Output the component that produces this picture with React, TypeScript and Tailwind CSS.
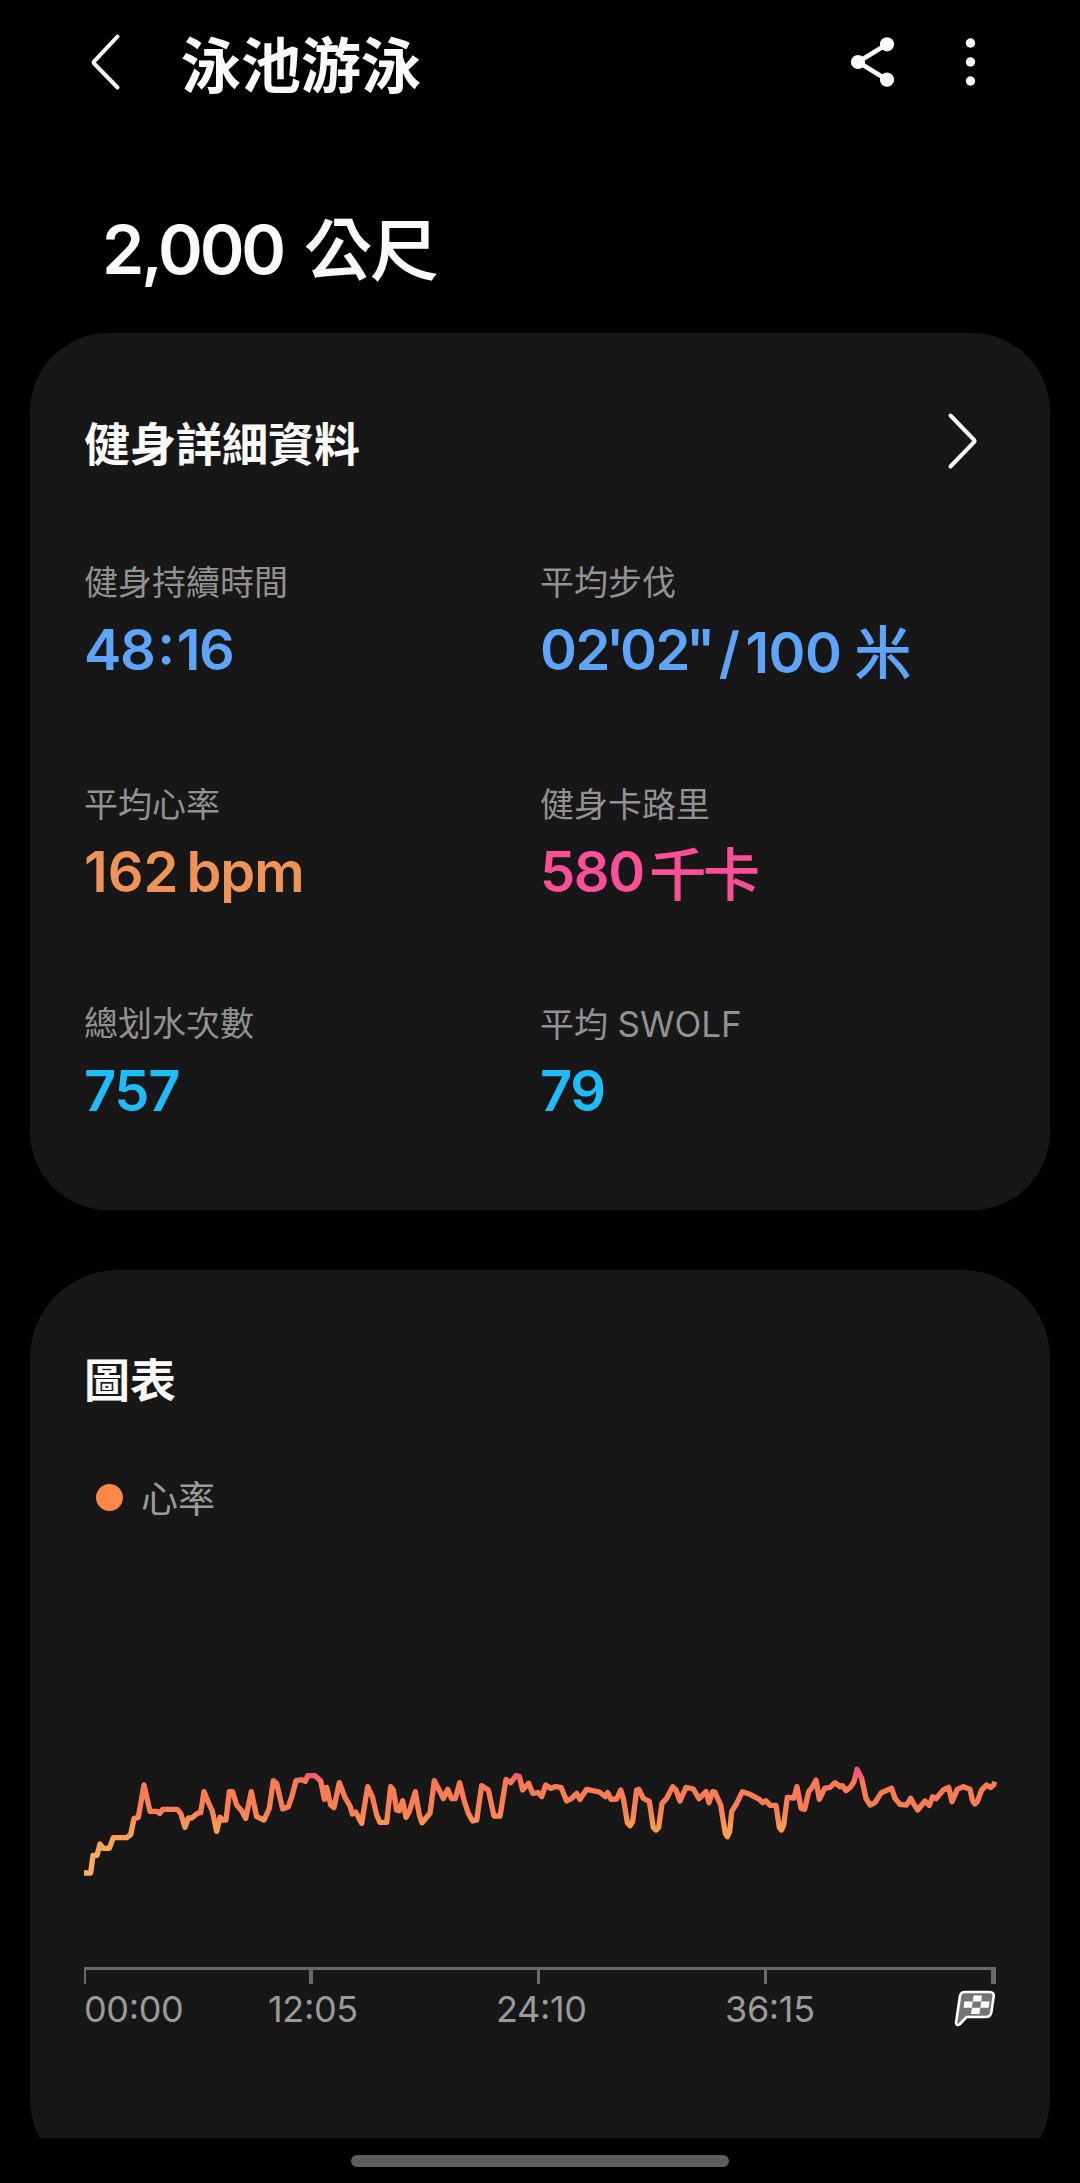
import { ReactNode } from "react";

interface Metric {
  label: ReactNode;
  value: string;
  unit?: ReactNode;
  color: string;
  valueClass?: string;
  unitClass?: string;
}

const metrics: Metric[] = [
  { label: "健身持續時間", value: "48:16", color: "text-[#5fa4fb]" },
  {
    label: "平均步伐",
    value: "02'02\"",
    unit: (
      <>
        <span className="mr-[6px]">/</span>100{" "}
        <span className="font-normal [-webkit-text-stroke:1.6px]">米</span>
      </>
    ),
    color: "text-[#5fa4fb]",
    unitClass: "ml-2 pt-[3px] tracking-[-0.01em]",
  },
  {
    label: "平均心率",
    value: "162",
    unit: "bpm",
    color: "text-[#ef9459]",
    valueClass: "tracking-normal",
    unitClass: "ml-2 tracking-[-0.018em]",
  },
  {
    label: "健身卡路里",
    value: "580",
    unit: "千卡",
    color: "text-[#fb4f97]",
    unitClass:
      "ml-[6px] pt-[3px] font-normal tracking-[-0.04em] [-webkit-text-stroke:1.6px]",
  },
  { label: "總划水次數", value: "757", color: "text-[#1fbcfb]" },
  {
    label: (
      <>
        平均 <span className="text-[35px]">SWOLF</span>
      </>
    ),
    value: "79",
    color: "text-[#1fbcfb]",
  },
];

// x,y pairs in thirds of a pixel
const heartRate = [
  "0,399 20,399 27,346 39,346 48,312 57,325 76,325 88,293 128,293 140,284 150,236 163,232 180,135",
  "198,214 218,214 227,220 236,208 280,208 290,220 303,262 313,234 323,234 340,220 350,218 360,155",
  "373,187 385,213 398,274 408,232 415,240 426,240 436,155 446,155 458,195 473,212 485,235 502,155",
  "518,230 540,240 556,205 568,122 578,130 596,207 613,200 625,165 636,122 653,119 664,124 671,107",
  "693,107 710,122 721,178 728,142 740,195 750,203 766,128 783,172 798,198 805,222 815,216 833,250",
  "851,140 865,170 878,225 888,247 908,247 920,140 928,150 938,210 946,212 956,182 966,232 976,215",
  "994,155 1006,225 1014,248 1038,220 1051,122 1068,155 1078,176 1091,148 1103,176 1114,176 1127,128",
  "1140,180 1153,220 1166,243 1178,240 1193,137 1213,150 1230,228 1248,228 1266,118 1280,128 1296,107",
  "1306,109 1316,150 1334,130 1346,160 1363,158 1373,170 1385,135 1400,145 1413,140 1431,142 1448,183",
  "1463,175 1478,160 1488,178 1508,148 1546,156 1564,170 1571,158 1581,178 1598,177 1610,150 1618,175",
  "1630,248 1638,257 1646,245 1658,150 1665,148 1678,175 1696,184 1708,262 1716,270 1724,262 1734,190",
  "1748,175 1766,140 1776,150 1788,183 1806,142 1828,147 1845,176 1866,155 1875,188 1886,155 1893,157",
  "1910,195 1924,280 1930,290 1937,275 1943,215 1958,190 1975,155 1998,163 2026,178 2036,188 2046,182",
  "2058,196 2076,196 2086,262 2092,270 2099,255 2110,172 2130,174 2139,140 2151,205 2162,208 2174,155",
  "2186,140 2196,120 2206,178 2222,145 2238,142 2253,128 2268,140 2275,137 2286,152 2300,140 2310,125",
  "2319,88 2333,115 2346,175 2358,195 2373,188 2392,158 2423,145 2433,175 2448,193 2468,195 2480,175",
  "2488,190 2501,210 2523,183 2536,196 2546,170 2556,176 2578,150 2594,142 2604,185 2620,148 2638,140",
  "2658,148 2665,180 2672,192 2680,185 2693,150 2708,135 2720,142 2729,135 2732,125",
].join(" ");

function Header() {
  return (
    <header className="flex h-[124px] items-center pl-[90px] pr-[104px]">
      <svg className="h-[60px] w-[32px]" viewBox="0 0 32 60" fill="none">
        <path
          d="M27.5 4.5L4.2 29.3Q3.2 30.5 4.2 31.7L27.5 55.5"
          stroke="#fafafa"
          strokeWidth="4"
          strokeLinecap="round"
        />
      </svg>
      <h1 className="ml-[59px] flex-1 pt-2 text-[60px] leading-[72px] font-bold">
        泳池游泳
      </h1>
      <svg className="h-[52px] w-[46px]" viewBox="0 0 46 52">
        <path
          d="M38 8.3L9 26L38 43.7"
          stroke="#fafafa"
          strokeWidth="4.6"
          fill="none"
        />
        <circle cx="9" cy="26" r="7.1" fill="#fafafa" />
        <circle cx="38" cy="8.3" r="7.1" fill="#fafafa" />
        <circle cx="38" cy="43.7" r="7.1" fill="#fafafa" />
      </svg>
      <svg className="ml-[70px] h-[52px] w-[11px]" viewBox="0 0 11 52">
        <circle cx="5.5" cy="7" r="4.7" fill="#fafafa" />
        <circle cx="5.5" cy="26" r="4.7" fill="#fafafa" />
        <circle cx="5.5" cy="45" r="4.7" fill="#fafafa" />
      </svg>
    </header>
  );
}

interface MetricValueProps {
  value: string;
  className?: string;
}

// Colons get more room than the font gives them, quote marks less
function MetricValue({ value, className }: MetricValueProps) {
  return (
    <span className={className}>
      {value.split(/([:'"])/).map((part, index) => (
        <span
          key={index}
          className={
            part === ":" ? "mx-[3px]" : /['"]/.test(part) ? "-mx-[3px]" : ""
          }
        >
          {part}
        </span>
      ))}
    </span>
  );
}

function MetricItem({
  label,
  value,
  unit,
  color,
  valueClass,
  unitClass,
}: Metric) {
  return (
    <div>
      <p className="h-[46px] text-[34px] leading-[46px] text-[#929292]">
        {label}
      </p>
      <div
        className={`mt-[6px] flex h-[76px] items-start text-[56px] leading-[76px] font-semibold tracking-[-0.025em] ${color}`}
      >
        <MetricValue value={value} className={valueClass} />
        {unit && (
          <span className={`whitespace-pre ${unitClass}`}>{unit}</span>
        )}
      </div>
    </div>
  );
}

function DetailsCard() {
  return (
    <section className="h-[877px] rounded-[78px] bg-[#171717] pt-[73px] pl-[54px]">
      <div className="flex h-[70px] items-center justify-between pr-[72px]">
        <h2 className="pt-[6px] text-[46px] leading-[60px] font-bold">
          健身詳細資料
        </h2>
        <svg className="h-[60px] w-[32px]" viewBox="0 0 32 60" fill="none">
          <path
            d="M4.5 4.5L28 28.8Q29 30 28 31.2L4.5 55.5"
            stroke="#fafafa"
            strokeWidth="4"
            strokeLinecap="round"
          />
        </svg>
      </div>
      <div className="mt-[84px] grid grid-cols-[456px_1fr] grid-rows-[222px_219px_150px]">
        {metrics.map((metric) => (
          <MetricItem key={metric.value} {...metric} />
        ))}
      </div>
    </section>
  );
}

function HeartRateLine() {
  return (
    <svg
      className="mt-[216px] block h-[150px] w-[912px] overflow-visible"
      viewBox="0 0 2736 450"
    >
      <defs>
        <linearGradient
          id="zone"
          gradientUnits="userSpaceOnUse"
          x1="0"
          y1="80"
          x2="0"
          y2="400"
        >
          <stop offset="0" stopColor="#f9507a" />
          <stop offset="0.08" stopColor="#f95a72" />
          <stop offset="0.14" stopColor="#fd7a54" />
          <stop offset="0.42" stopColor="#fb7f55" />
          <stop offset="0.58" stopColor="#fd9d54" />
          <stop offset="1" stopColor="#fcb063" />
        </linearGradient>
      </defs>
      <polyline
        points={heartRate}
        fill="none"
        stroke="url(#zone)"
        strokeWidth="16"
        strokeLinejoin="round"
      />
    </svg>
  );
}

function FlagIcon() {
  return (
    <svg className="h-[38px] w-[42px]" viewBox="0 0 42 38">
      <path
        d="M10.5 2H35.5Q40.3 2 39.7 6.5L37.3 22.5Q36.3 27 32 27H12.5L5.8 34.2Q2.8 36.3 2 33L5.8 7Q6.5 2 10.5 2Z"
        fill="#757575"
        stroke="#fff"
        strokeWidth="2.6"
      />
      <path
        d="M19.6 5.5H28L27.2 11.5H35.6L34.7 17.8H26.3L25.4 24H17L17.9 17.8H9.5L10.4 11.5H18.8ZM18.8 11.5L17.9 17.8H26.3L27.2 11.5Z"
        fill="#fff"
        fillRule="evenodd"
      />
    </svg>
  );
}

function TimeAxis() {
  return (
    <div>
      <div className="mt-[77px] flex h-[17px] w-[912px] border-t-[3px] border-[#6b6b6b]">
        <i className="w-[2px] bg-[#6b6b6b]" />
        <i className="ml-[223px] w-[4px] bg-[#6b6b6b]" />
        <i className="ml-[224px] w-[3px] bg-[#6b6b6b]" />
        <i className="ml-[224px] w-[3px] bg-[#6b6b6b]" />
        <i className="ml-[224px] w-[5px] bg-[#6b6b6b]" />
      </div>
      <div className="mt-[3px] flex h-[44px] w-[912px] text-[36px] leading-[44px] tracking-[-0.01em] text-[#9b9b9b]">
        <span className="w-[184px]">00:00</span>
        <span className="w-[228px]">12:05</span>
        <span className="w-[229px]">24:10</span>
        <span className="w-[229px]">36:15</span>
        <div className="pt-[3px]">
          <FlagIcon />
        </div>
      </div>
    </div>
  );
}

function ChartCard() {
  return (
    <section className="mt-[60px] h-[916px] rounded-[88px] bg-[#171717] pt-[80px] pl-[54px]">
      <h2 className="h-[60px] text-[46px] leading-[60px] font-bold">圖表</h2>
      <div className="mt-[65px] flex h-[49px] items-center pl-[12px]">
        <span className="mb-[5px] h-[27px] w-[27px] rounded-full bg-[#ff8748]" />
        <span className="ml-[18px] text-[37px] leading-[48px] text-[#9b9b9b]">
          心率
        </span>
      </div>
      <HeartRateLine />
      <TimeAxis />
    </section>
  );
}

export default function App() {
  return (
    <div
      lang="zh-Hant"
      className="flex h-[2183px] w-[1080px] flex-col overflow-hidden bg-black font-['Inter','Noto_Sans_CJK_TC',sans-serif] text-[#fafafa] [font-feature-settings:'case']"
    >
      <main className="h-[2138px] overflow-hidden">
        <Header />
        <p className="flex h-[209px] items-baseline pt-[80px] pl-[102px] text-[68px] leading-[90px] font-semibold tracking-[-0.046em]">
          2,000
          <span className="ml-[22px] text-[66px] font-normal tracking-normal [-webkit-text-stroke:2.2px]">
            公尺
          </span>
        </p>
        <div className="px-[30px]">
          <DetailsCard />
          <ChartCard />
        </div>
      </main>
      <div className="flex flex-1 items-start justify-center pt-[17px]">
        <div className="h-[12px] w-[378px] rounded-full bg-[#5e5e5e]" />
      </div>
    </div>
  );
}
